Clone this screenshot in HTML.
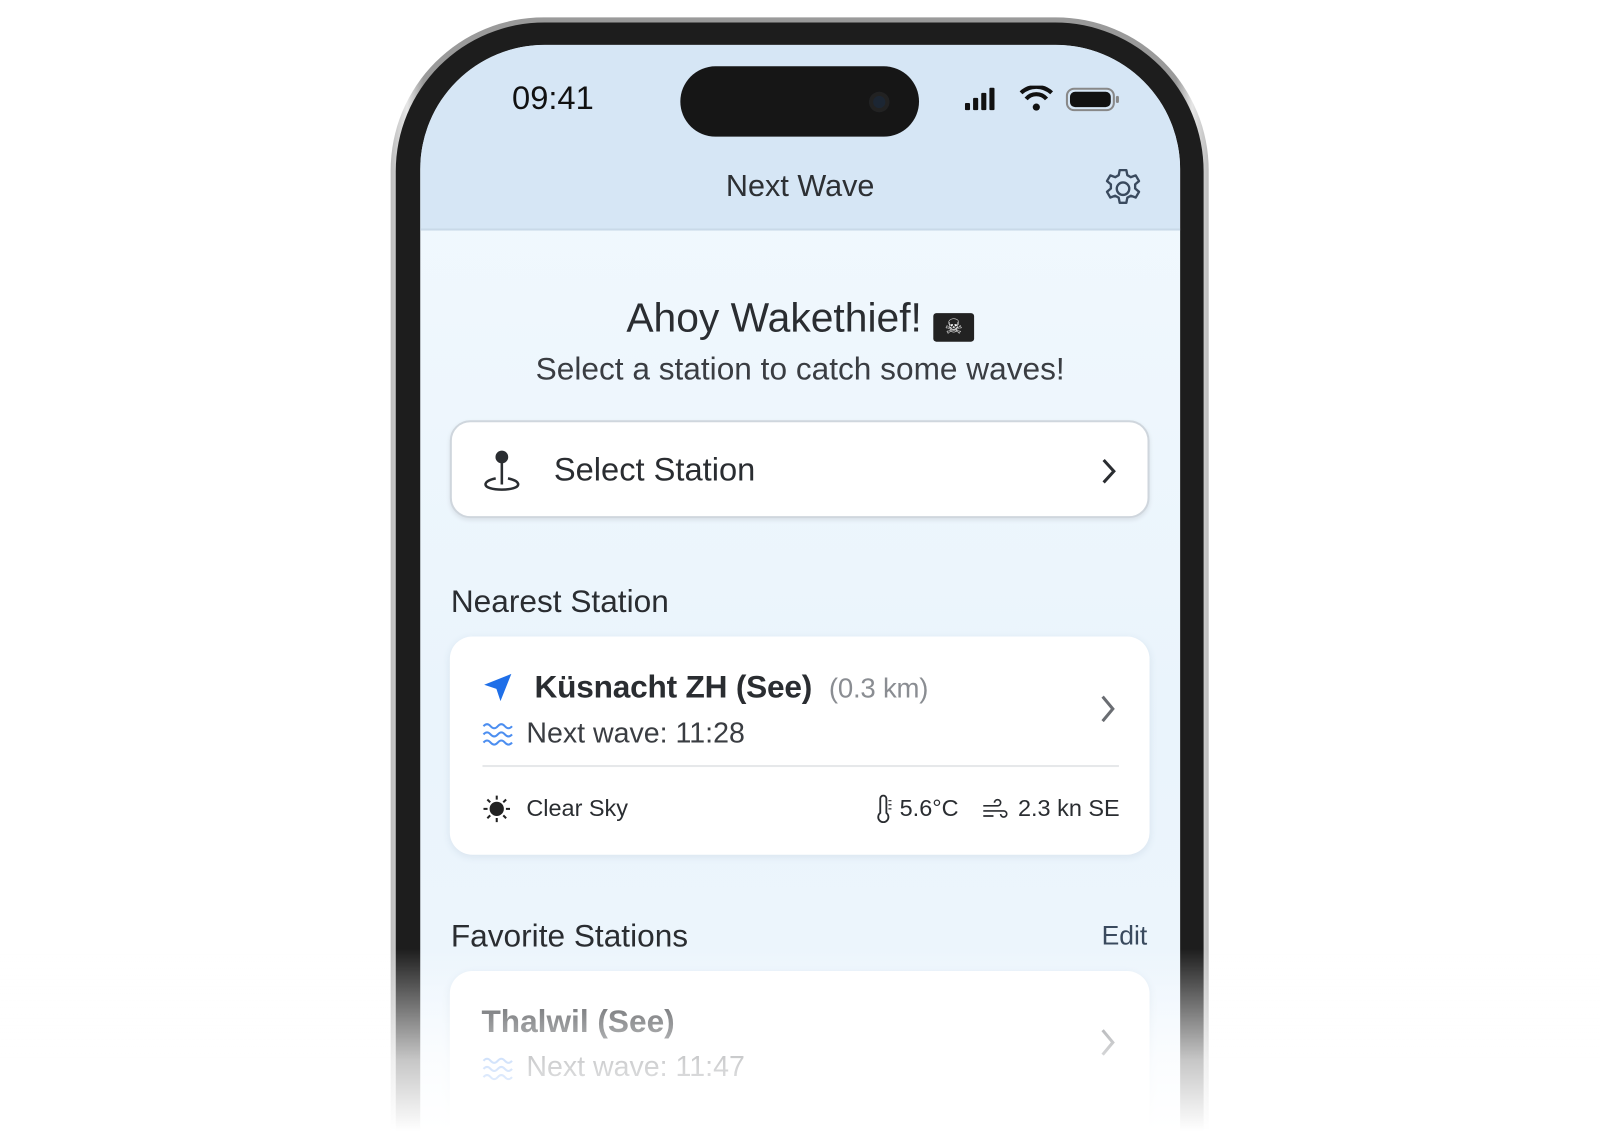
<!DOCTYPE html>
<html style="width:1600px;height:1148px;overflow:hidden"><head><meta charset="utf-8"><style>
*{margin:0;padding:0;box-sizing:border-box}
body{width:1600px;height:1148px;background:#fff;position:relative;overflow:hidden;font-family:"Liberation Sans",sans-serif;color:#2a2d31}
.abs{position:absolute}
.wrap{left:0;top:0;width:1570px;height:1126px;overflow:hidden;transform:scale(1.02);transform-origin:0 0}
.rim{left:383px;top:17px;width:802px;height:1131px;border-radius:150px 150px 0 0;background:linear-gradient(90deg,#bdbdbd,#e6e6e6 2%,#9a9a9a 4%,#9a9a9a 96%,#e6e6e6 98%,#bdbdbd)}
.frame{left:388px;top:22px;width:792px;height:1126px;border-radius:146px 146px 0 0;background:#1d1d1d}
.screen{left:412px;top:44px;width:745px;height:1104px;border-radius:122px 122px 0 0;overflow:hidden;background:linear-gradient(#f2f9fe,#eaf4fc 60%,#eef6fd)}
.hdr{left:0;top:0;width:745px;height:182px;background:#d6e6f5;border-bottom:2px solid #c9d9e8}
.card{background:#fff;border-radius:22px;box-shadow:0 2px 8px rgba(60,90,120,.1)}
.fade{left:0;top:930px;width:1600px;height:218px;background:linear-gradient(rgba(255,255,255,0),rgba(255,255,255,.75) 50%,#fff 82%)}
</style></head><body>
<div class="abs wrap">
<div class="abs rim"></div>
<div class="abs frame"></div>
<div class="abs screen">
  <div class="abs hdr"></div>
  <div class="abs" style="left:90px;top:34px;font-size:32px;color:#111">09:41</div>
  <div class="abs" style="left:255px;top:21px;width:234px;height:69px;border-radius:35px;background:#161616"></div>
  <div class="abs" style="left:440px;top:46px;width:20px;height:20px;border-radius:50%;background:#1c2633;box-shadow:inset 0 0 0 4px #222"></div>
  <svg class="abs" style="left:534px;top:40px" width="160" height="30">
    <rect x="0" y="17" width="5" height="7" rx="1" fill="#111"/><rect x="8" y="12" width="5" height="12" rx="1" fill="#111"/><rect x="16" y="7" width="5" height="17" rx="1" fill="#111"/><rect x="24" y="2" width="5" height="22" rx="1" fill="#111"/>
    <path d="M55 7a22 22 0 0 1 30 0" stroke="#111" stroke-width="4" fill="none"/><path d="M60 13a13 13 0 0 1 20 0" stroke="#111" stroke-width="4" fill="none"/><circle cx="70" cy="21" r="3.5" fill="#111"/>
    <rect x="100" y="3" width="46" height="21" rx="7" fill="none" stroke="#888" stroke-width="2"/><rect x="103" y="6" width="40" height="15" rx="5" fill="#111"/><rect x="148" y="10" width="3" height="7" rx="1.5" fill="#888"/>
  </svg>
  <div class="abs" style="left:0;width:745px;top:122px;text-align:center;font-size:30px;color:#2d3034">Next Wave</div>
  <svg class="abs" style="left:666px;top:118px" width="46" height="46" viewBox="0 0 24 24" fill="none" stroke="#3a4a5e" stroke-width="1.2"><path d="M10.3 2.5h3.4l.5 2.6 1.8 1 2.5-.9 1.7 2.9-2 1.7v2.1l2 1.7-1.7 2.9-2.5-.9-1.8 1-.5 2.6h-3.4l-.5-2.6-1.8-1-2.5.9-1.7-2.9 2-1.7v-2.1l-2-1.7 1.7-2.9 2.5.9 1.8-1z" stroke-linejoin="round"/><circle cx="12" cy="12" r="3.2"/></svg>
  <div class="abs" style="left:0;width:745px;top:246px;text-align:center;font-size:40px;color:#2a2d31">Ahoy Wakethief! <span style="display:inline-block;width:40px;height:28px;background:#222;border-radius:3px;vertical-align:-2px;color:#fff;font-size:20px;line-height:28px;text-align:center">☠</span></div>
  <div class="abs" style="left:0;width:745px;top:300px;text-align:center;font-size:31px;color:#3a3d42">Select a station to catch some waves!</div>
  <div class="abs" style="left:29px;top:368px;width:686px;height:96px;background:#fff;border:2px solid #cfd6dd;border-radius:20px;box-shadow:0 2px 4px rgba(0,0,0,.08)"></div>
  <svg class="abs" style="left:60px;top:395px" width="40" height="46" viewBox="0 0 40 46" fill="none" stroke="#2a2d31" stroke-width="2.5"><circle cx="20" cy="9" r="5" fill="#2a2d31"/><path d="M20 14v22"/><path d="M14 30c-7 1.5-10 3.5-10 6 0 3 7 5 16 5s16-2 16-5c0-2.5-3-4.5-10-6"/></svg>
  <div class="abs" style="left:131px;top:398px;font-size:32px;color:#2a2d31">Select Station</div>
  <svg class="abs" style="left:666px;top:404px" width="18" height="28"><path d="M4 3l10 11-10 11" stroke="#2a2d31" stroke-width="3" fill="none"/></svg>
  <div class="abs" style="left:30px;top:528px;font-size:31px;color:#2a2d31">Nearest Station</div>
  <div class="abs card" style="left:29px;top:580px;width:686px;height:214px"></div>
  <svg class="abs" style="left:60px;top:614px" width="32" height="32" viewBox="0 0 24 24"><path d="M22 2L2 10l9 3 3 9z" fill="#1f6fe8"/></svg>
  <div class="abs" style="left:112px;top:612px;font-size:31px;color:#2a2d31;font-weight:bold;letter-spacing:-0.2px">Küsnacht ZH (See) <span style="font-weight:normal;color:#8a8d92;font-size:27px;margin-left:8px">(0.3 km)</span></div>
  <svg class="abs" style="left:60px;top:662px" width="32" height="28" viewBox="0 0 32 28" fill="none" stroke="#4c8ef0" stroke-width="2"><path d="M2 6q3.5-4 7 0t7 0 7 0 7 0M2 14q3.5-4 7 0t7 0 7 0 7 0M2 22q3.5-4 7 0t7 0 7 0 7 0"/></svg>
  <div class="abs" style="left:104px;top:659px;font-size:28px;color:#3a3d42">Next wave: 11:28</div>
  <svg class="abs" style="left:664px;top:636px" width="20" height="30"><path d="M5 3l10 12-10 12" stroke="#6a6d72" stroke-width="3" fill="none"/></svg>
  <div class="abs" style="left:61px;top:706px;width:624px;height:2px;background:#e6e8ea"></div>
  <svg class="abs" style="left:60px;top:734px" width="30" height="30" viewBox="0 0 30 30" stroke="#222" stroke-width="2"><circle cx="15" cy="15" r="6" fill="#222"/><path d="M15 2v4M15 24v4M2 15h4M24 15h4M5.8 5.8l2.8 2.8M21.4 21.4l2.8 2.8M5.8 24.2l2.8-2.8M21.4 8.6l2.8-2.8"/></svg>
  <div class="abs" style="left:104px;top:735px;font-size:23px;color:#2a2d31">Clear Sky</div>
  <svg class="abs" style="left:446px;top:735px" width="18" height="28" viewBox="0 0 18 28" fill="none" stroke="#2a2d31" stroke-width="1.8"><path d="M5 18V4a3 3 0 0 1 6 0v14a5 5 0 1 1-6 0z"/><path d="M13 6h3M13 10h3M13 14h3" stroke-width="1.2"/></svg>
  <div class="abs" style="left:470px;top:735px;font-size:23px;color:#2a2d31">5.6°C</div>
  <svg class="abs" style="left:550px;top:738px" width="28" height="24" viewBox="0 0 28 24" fill="none" stroke="#2a2d31" stroke-width="1.6"><path d="M2 8h14a3 3 0 1 0-3-3M2 13h20a3 3 0 1 1-3 3M2 18h10"/></svg>
  <div class="abs" style="left:586px;top:735px;font-size:23px;color:#2a2d31">2.3 kn SE</div>
  <div class="abs" style="left:30px;top:856px;font-size:31px;color:#2a2d31">Favorite Stations</div>
  <div class="abs" style="left:668px;top:858px;font-size:26px;color:#3a4a5e">Edit</div>
  <div class="abs card" style="left:29px;top:908px;width:686px;height:214px"></div>
  <div class="abs" style="left:60px;top:940px;font-size:31px;color:#2a2d31;font-weight:bold">Thalwil (See)</div>
  <svg class="abs" style="left:60px;top:990px" width="32" height="28" viewBox="0 0 32 28" fill="none" stroke="#4c8ef0" stroke-width="2"><path d="M2 6q3.5-4 7 0t7 0 7 0 7 0M2 14q3.5-4 7 0t7 0 7 0 7 0M2 22q3.5-4 7 0t7 0 7 0 7 0"/></svg>
  <div class="abs" style="left:104px;top:986px;font-size:28px;color:#3a3d42">Next wave: 11:47</div>
  <svg class="abs" style="left:664px;top:963px" width="20" height="30"><path d="M5 3l10 12-10 12" stroke="#6a6d72" stroke-width="3" fill="none"/></svg>
</div>
<div class="abs fade"></div>
</div>
</body></html>
